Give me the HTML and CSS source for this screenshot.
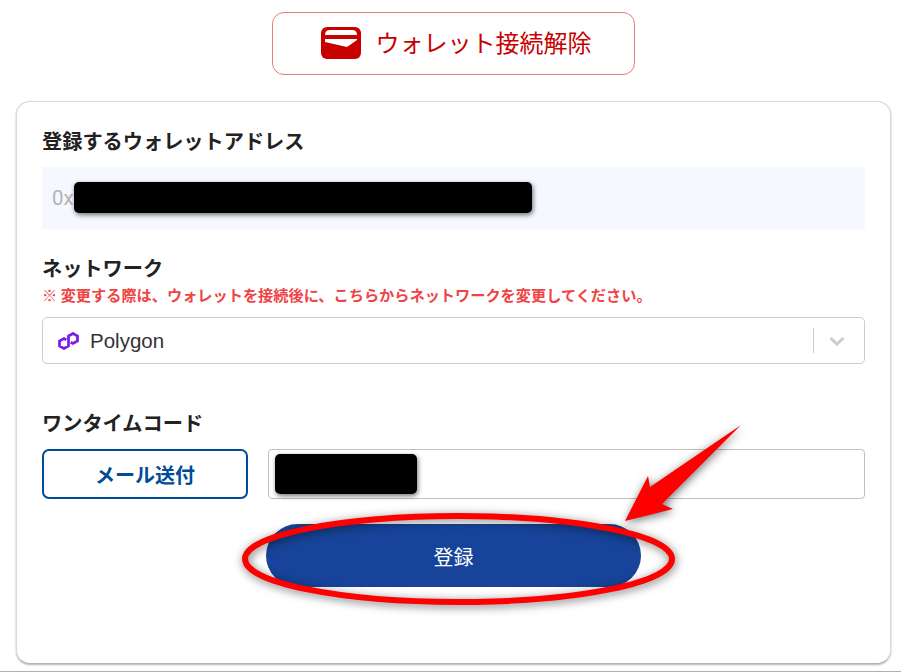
FILE: index.html
```html
<!DOCTYPE html>
<html lang="ja">
<head>
  <meta charset="UTF-8">
  <title>ウォレット登録</title>
  <meta name="viewport" content="width=device-width, initial-scale=1.0">
  <link rel="stylesheet" href="styles.css">
</head>

<body>

  <div class="wallet-row">
    <button class="wallet-btn">
      <svg class="wallet-icon" viewBox="0 0 40 32" width="40" height="32">
        <rect width="40" height="32" rx="6" fill="#c80000"/>
        <path d="M4 8 Q4 3 9 3 H31 Q36 3 36 8 Z" fill="#fff"/>
        <path d="M4 12 H36 V13 L26 20 L4 15 Z" fill="#fff"/>
      </svg>
      <span class="wallet-text">ウォレット接続解除</span>
    </button>
  </div>

  <div class="card">
    <h2 class="label">登録するウォレットアドレス</h2>
    <div class="address">
      0x
      <span class="mask mask-address"></span>
    </div>

    <h2 class="label label-network">ネットワーク</h2>
    <p class="notice">※ 変更する際は、ウォレットを接続後に、こちらからネットワークを変更してください。</p>
    <div class="select">
      <svg class="polygon-icon" viewBox="0 0 21 18" width="21" height="18">
        <path d="M8.3 7.8 L6 6.5 L1.5 9 V14 L6 16.5 L10.5 14 V4 L15 1.5 L19.5 4 V9 L15 11.5 L12.7 10.2" fill="none" stroke="#7b1fe8" stroke-width="2.8"/>
      </svg>
      <span class="select-value">Polygon</span>
      <span class="select-sep"></span>
      <svg class="chevron" viewBox="0 0 20 20" width="20" height="20">
        <path d="M3.5 7 L10 13 L16.5 7" fill="none" stroke="#cccccc" stroke-width="3"/>
      </svg>
    </div>

    <h2 class="label label-code">ワンタイムコード</h2>
    <div class="code-row">
      <button class="send-btn">メール送付</button>
      <div class="code-input">
        <span class="mask mask-code"></span>
      </div>
    </div>

    <div class="submit-row">
      <button class="submit-btn">登録</button>
    </div>
  </div>

  <div class="page-end"></div>

  <!-- red annotation drawn over the screenshot -->
  <svg class="annotation" viewBox="0 0 901 672" width="901" height="672">
    <ellipse cx="458.5" cy="559" rx="213.5" ry="43" fill="none" stroke="#ff0000" stroke-width="6"/>
    <polygon points="741,425 662,504 673,509 625,521 648,476 650,487" fill="#ff0000"/>
  </svg>

</body>
</html>
```

FILE: styles.css
```css
:root {
  --red: #c80000;
  --navy: #17449a;
  --border: #cccccc;
  --text: #222222;
}

* {
  box-sizing: border-box;
}

html,
body {
  height: 672px;
}

body {
  margin: 0;
  background-color: #fff;
  color: var(--text);
  font-family: 'Noto Sans CJK JP', 'Liberation Sans', sans-serif;
  overflow: hidden;
  display: flex;
  flex-direction: column;
}

button {
  font-family: inherit;
  cursor: pointer;
}

.wallet-row {
  display: flex;
  justify-content: center;
  padding: 12px 0 0 6px;
}

.wallet-btn {
  width: 363px;
  height: 63px;
  display: flex;
  align-items: center;
  justify-content: center;
  gap: 15px;
  background: #fff;
  border: 1px solid #e87b7b;
  border-radius: 12px;
  color: var(--red);
  font-size: 24px;
  padding: 0 0 2px 5px;
}

.wallet-text {
  margin-bottom: 2px;
}

.card {
  width: 875px;
  height: 563px;
  margin: 26px 0 0 16px;
  padding: 25px 25px 0;
  background: #fff;
  border: 1px solid #d8d8de;
  border-bottom-color: #b4b4ba;
  border-radius: 14px;
  box-shadow: 0 1px 2px rgba(0, 0, 0, 0.3);
}

.label {
  margin: 0;
  font-size: 20.2px;
  font-weight: 700;
  line-height: 28px;
}

.address {
  height: 62px;
  margin-top: 12px;
  padding-left: 10px;
  display: flex;
  align-items: center;
  background: #f5f8fe;
  color: #b4b4b4;
  font-family: 'Roboto', sans-serif;
  font-size: 20.5px;
}

.mask {
  display: block;
  background: #000;
  border-radius: 5px;
  box-shadow: 1px 2px 5px rgba(0, 0, 0, 0.55);
}

.mask-address {
  width: 458px;
  height: 31px;
  margin-bottom: 2px;
}

.mask-code {
  width: 142px;
  height: 40px;
}

.label-network {
  margin-top: 25px;
}

.notice {
  margin: 1px 0 0;
  color: #ef4444;
  font-size: 15.2px;
  font-weight: 700;
  line-height: 22px;
}

.select {
  height: 47px;
  margin-top: 12px;
  padding: 0 17px 0 15px;
  display: flex;
  align-items: center;
  border: 1px solid var(--border);
  border-radius: 5px;
  font-family: 'Liberation Sans', sans-serif;
  font-size: 20.5px;
}

.polygon-icon {
  margin-right: 11px;
}

.select-value {
  flex: 1;
  color: #333;
}

.select-sep {
  width: 1px;
  height: 25px;
  margin-right: 13px;
  background: var(--border);
}

.label-code {
  margin-top: 45px;
}

.code-row {
  display: flex;
  gap: 20px;
  margin-top: 12px;
}

.send-btn {
  width: 206px;
  height: 50px;
  background: #fff;
  border: 2px solid #004c98;
  border-radius: 7px;
  color: #004c98;
  font-size: 20px;
  font-weight: 700;
  padding: 0;
}

.code-input {
  flex: 1;
  height: 50px;
  padding: 4px 6px;
  border: 1px solid #c0c0c0;
  border-radius: 4px;
}

.submit-row {
  display: flex;
  justify-content: center;
  margin-top: 25px;
}

.submit-btn {
  width: 375px;
  height: 63px;
  background: var(--navy);
  border: 0;
  border-radius: 32px;
  color: #fff;
  font-size: 20px;
  padding: 2px 0 0;
}

.page-end {
  margin-top: auto;
  height: 1px;
  background: #b0b0b0;
}

.annotation {
  position: absolute;
  left: 0;
  top: 0;
  pointer-events: none;
  filter: drop-shadow(1px 2px 5px rgba(0, 0, 0, 0.55));
}
```
